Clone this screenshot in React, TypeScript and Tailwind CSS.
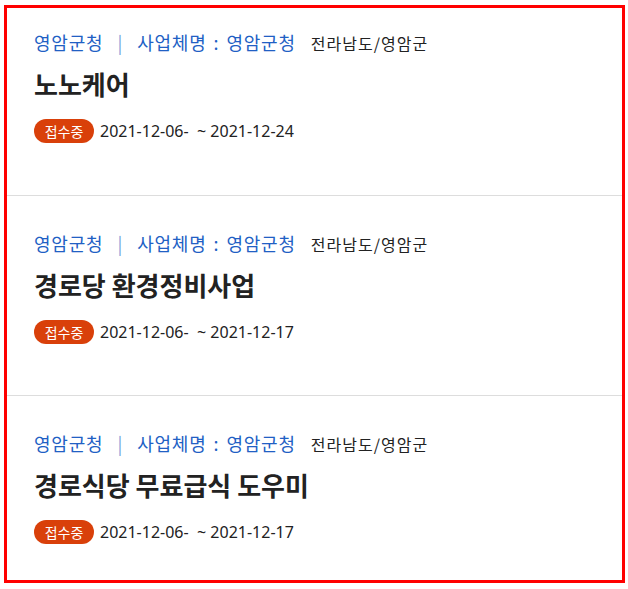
import React from "react";

const items = [
  { title: "노노케어", start: "2021-12-06-", end: "2021-12-24" },
  { title: "경로당 환경정비사업", start: "2021-12-06-", end: "2021-12-17" },
  { title: "경로식당 무료급식 도우미", start: "2021-12-06-", end: "2021-12-17" },
];

export default function App() {
  return (
    <div
      className="w-[628px] h-[589px] bg-white pl-[4px] pt-[5px]"
      style={{ fontFamily: "'Noto Sans CJK KR', 'Noto Sans', sans-serif" }}
    >
      <div className="w-[621px] h-[578px] border-[3px] border-[#ff0000] overflow-hidden">
        <ul>
          {items.map((it, i) => (
            <li
              key={i}
              className="h-[200px] first:h-[188px] pt-[34px] first:pt-[21px] pl-[27px] border-b border-[#dddddd]"
            >
              {/* Top meta line */}
              <div className="flex items-center h-[27px] text-[18px] tracking-[0.8px] text-[#2160c4]">
                <span>영암군청</span>
                <span className="mx-[14px] text-[#7aa3dc]">|</span>
                <span>사업체명</span>
                <span className="mx-[7px]">:</span>
                <span>영암군청</span>
                <span className="ml-[15px] text-[16px] tracking-[1px] text-[#222222]">전라남도/영암군</span>
              </div>

              {/* Title */}
              <div className="mt-[10px] h-[36px] leading-[36px] text-[26px] font-bold text-[#222222]">
                {it.title}
              </div>

              {/* Status + dates */}
              <div className="mt-[17px] flex items-center h-[24px]">
                <span className="inline-flex items-center justify-center w-[60px] h-[24px] rounded-full bg-[#d9400a] text-white text-[14px]">
                  접수중
                </span>
                <span
                  className="ml-[6px] text-[16px] text-[#222222]"
                  style={{ fontFamily: "'Noto Sans', 'Noto Sans CJK KR', sans-serif" }}
                >
                  {it.start}{"\u00a0"} ~ {it.end}
                </span>
              </div>
            </li>
          ))}
        </ul>
      </div>
    </div>
  );
}
